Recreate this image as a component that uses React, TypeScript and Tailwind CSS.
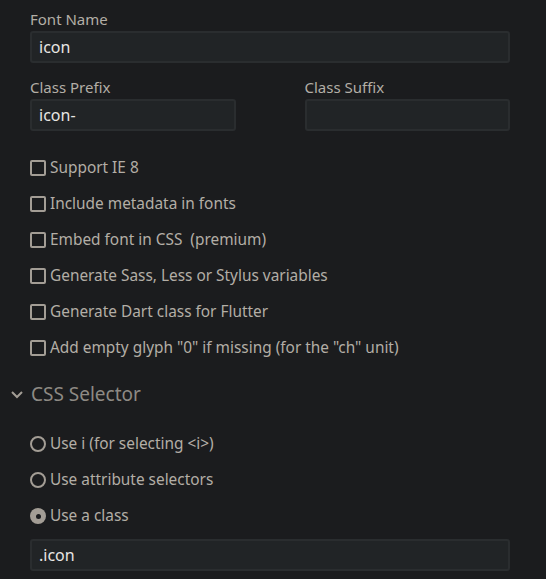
import React from "react";

const font = { fontFamily: '"Noto Sans", "Open Sans", sans-serif' };

function Field({ label, value, className }: { label: string; value?: string; className?: string }) {
  return (
    <div className={className}>
      <div className="text-[15px] leading-[18px] text-[#b3aea6] mb-[3px] pt-[1px]">{label}</div>
      <div className="h-[32px] rounded-[3px] border-2 border-[#2a2d2f] bg-[#212426] px-[7px] flex items-center text-[16px] text-[#e8e6e3]">
        {value}
      </div>
    </div>
  );
}

function Check({ label }: { label: string }) {
  return (
    <label className="flex items-center h-[36px] gap-[4px]">
      <span className="w-[16px] h-[16px] border-2 border-[#a39d95] rounded-[2px] shrink-0" />
      <span className="text-[15.4px] text-[#b3aea6] whitespace-pre">{label}</span>
    </label>
  );
}

function Radio({ label, checked }: { label: string; checked?: boolean }) {
  return (
    <label className="flex items-center h-[36px] gap-[4px]">
      {checked ? (
        <span className="w-[16px] h-[16px] rounded-full bg-[#a39d95] flex items-center justify-center shrink-0">
          <span className="w-[5px] h-[5px] rounded-full bg-[#1b1c1e]" />
        </span>
      ) : (
        <span className="w-[16px] h-[16px] border-2 border-[#a39d95] rounded-full shrink-0" />
      )}
      <span className="text-[15.4px] text-[#b3aea6]">{label}</span>
    </label>
  );
}

export default function App() {
  return (
    <div className="w-[546px] h-[579px] bg-[#1b1c1e] overflow-hidden" style={font}>
      <div className="pl-[30px] pr-[36px] pt-[9px]">
        <Field label="Font Name" value="icon" />
        <div className="flex gap-[69px] mt-[14px]">
          <Field label="Class Prefix" value="icon-" className="w-[206px]" />
          <Field label="Class Suffix" className="w-[206px]" />
        </div>
        <div className="mt-[19px]">
          <Check label="Support IE 8" />
          <Check label="Include metadata in fonts" />
          <Check label="Embed font in CSS  (premium)" />
          <Check label="Generate Sass, Less or Stylus variables" />
          <Check label="Generate Dart class for Flutter" />
          <Check label='Add empty glyph "0" if missing (for the "ch" unit)' />
        </div>
      </div>
      <div className="flex items-center h-[36px] mt-[10px] pl-[10px] gap-[7px]">
        <svg width="14" height="14" viewBox="0 0 14 14" fill="none" stroke="#a39d95" strokeWidth="2">
          <path d="M2 5l5 5 5-5" />
        </svg>
        <span className="text-[19px] text-[#8e8a84]">CSS Selector</span>
      </div>
      <div className="pl-[30px] pr-[36px] mt-[14px]">
        <Radio label="Use i (for selecting <i>)" />
        <Radio label="Use attribute selectors" />
        <Radio label="Use a class" checked />
        <div className="mt-[5px] h-[32px] rounded-[3px] border-2 border-[#2a2d2f] bg-[#212426] px-[7px] flex items-center text-[16px] text-[#e8e6e3]">
          .icon
        </div>
      </div>
    </div>
  );
}
